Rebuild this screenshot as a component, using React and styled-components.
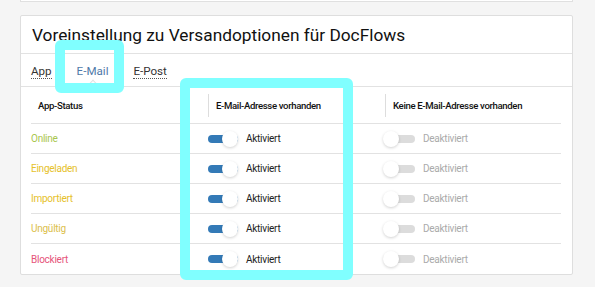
import React from "react";
import styled, { createGlobalStyle } from "styled-components";

const Global = createGlobalStyle`
  html, body { margin: 0; padding: 0; background: #f5f5f5; }
  body { font-family: Roboto, "Noto Sans", sans-serif; color: #222; }
  * { box-sizing: border-box; }
`;

const Page = styled.div`
  position: relative;
  width: 595px;
  height: 287px;
  overflow: hidden;
  padding: 0 22px 0 20px;
`;

const PrevCard = styled.div`
  height: 2px;
  background: #fff;
  border: 1px solid #e0e0e0;
  border-top: none;
`;

const Card = styled.div`
  margin-top: 13px;
  background: #fff;
  border: 1px solid #dedede;
  border-radius: 2px;
`;

const Title = styled.h2`
  margin: 0;
  height: 38px;
  padding: 0 11px;
  display: flex;
  align-items: center;
  font-size: 17.3px;
  font-weight: 400;
  color: #111;
  border-bottom: 1px solid #e2e2e2;
`;

const Tabs = styled.div`
  height: 33px;
  padding: 0 10px;
  display: flex;
  align-items: center;
  gap: 25px;
  border-bottom: 1px solid #e2e2e2;
`;

const Tab = styled.span`
  position: relative;
  font-size: 11.6px;
  line-height: 14px;
  padding-top: 2px;
  color: ${(p) => (p.$active ? "#4f79a8" : "#333")};
  border-bottom: ${(p) => (p.$active ? "1px solid transparent" : "1px dotted #555")};
`;

const Caret = styled.span`
  position: absolute;
  left: 50%;
  bottom: -10px;
  width: 7px;
  height: 7px;
  background: #fff;
  border-left: 1px solid #e2e2e2;
  border-top: 1px solid #e2e2e2;
  transform: translateX(-50%) rotate(45deg);
`;

const Table = styled.div`
  margin: 0 11px 0 10px;
`;

const Row = styled.div`
  display: grid;
  grid-template-columns: 177px 177px 1fr;
  border-bottom: 1px solid #e2e2e2;
  height: ${(p) => (p.$head ? "37px" : "30px")};
  &:last-child { border-bottom: none; }
`;

const HeadCell = styled.div`
  display: flex;
  align-items: center;
  padding-left: 7px;
  font-size: 9.6px;
  font-weight: 500;
  color: #111;
  letter-spacing: -0.35px;
  border-left: ${(p) => (p.$sep ? "1px solid #ddd" : "none")};
  margin: ${(p) => (p.$sep ? "7px 0 6px" : "0")};
`;

const Cell = styled.div`
  display: flex;
  align-items: center;
  font-size: 10px;
  letter-spacing: -0.25px;
  color: ${(p) => p.$color || "#222"};
`;

const Switch = styled.span`
  position: relative;
  display: inline-block;
  width: 30px;
  height: 16px;
  margin-right: 8px;
  flex: none;
  &::before {
    content: "";
    position: absolute;
    left: 0;
    right: 0;
    top: 4px;
    height: 8px;
    border-radius: 4px;
    background: ${(p) => (p.$on ? "#337ab7" : "#dcdcdc")};
  }
  &::after {
    content: "";
    position: absolute;
    top: 0;
    ${(p) => (p.$on ? "right: 0;" : "left: -2px;")}
    width: 16px;
    height: 16px;
    border-radius: 50%;
    background: #fff;
    box-shadow: 0 1px 3px rgba(0, 0, 0, 0.18);
  }
`;

const Label = styled.span`
  color: ${(p) => (p.$on ? "#222" : "#aaa")};
`;

const Highlight = styled.div`
  position: absolute;
  border: 10px solid #80ffff;
  border-radius: 6px;
  pointer-events: none;
`;

const rows = [
  { name: "Online", color: "#a9c64e" },
  { name: "Eingeladen", color: "#e6c12a" },
  { name: "Importiert", color: "#e6c12a" },
  { name: "Ungültig", color: "#dcc04a" },
  { name: "Blockiert", color: "#e6557a" },
];

export default function App() {
  return (
    <Page>
      <Global />
      <PrevCard />
      <Card>
        <Title>Voreinstellung zu Versandoptionen für DocFlows</Title>
        <Tabs>
          <Tab>App</Tab>
          <Tab $active>
            E-Mail
            <Caret />
          </Tab>
          <Tab>E-Post</Tab>
        </Tabs>
        <Table>
          <Row $head>
            <HeadCell>App-Status</HeadCell>
            <HeadCell $sep>E-Mail-Adresse vorhanden</HeadCell>
            <HeadCell $sep>Keine E-Mail-Adresse vorhanden</HeadCell>
          </Row>
          {rows.map((r) => (
            <Row key={r.name}>
              <Cell $color={r.color}>{r.name}</Cell>
              <Cell>
                <Switch $on />
                <Label $on>Aktiviert</Label>
              </Cell>
              <Cell>
                <Switch />
                <Label>Deaktiviert</Label>
              </Cell>
            </Row>
          ))}
        </Table>
      </Card>
      <Highlight style={{ left: 55, top: 40, width: 69, height: 53 }} />
      <Highlight style={{ left: 180, top: 78, width: 173, height: 202 }} />
    </Page>
  );
}
